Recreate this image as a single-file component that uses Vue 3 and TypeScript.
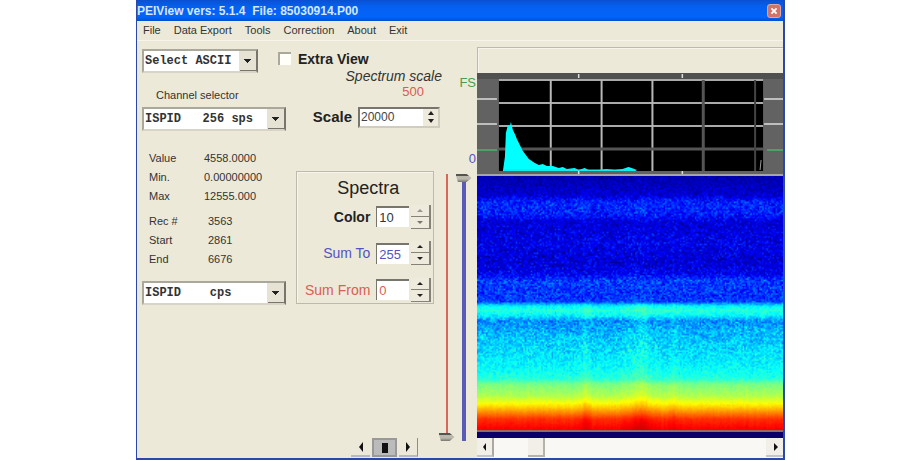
<script setup lang="ts">
import { onMounted, ref } from 'vue'

const menu: string[] = ['File', 'Data Export', 'Tools', 'Correction', 'About', 'Exit']

const readings = [
  { label: 'Value', value: '4558.0000' },
  { label: 'Min.', value: '0.00000000' },
  { label: 'Max', value: '12555.000' },
]
const records = [
  { label: 'Rec #', value: '3563' },
  { label: 'Start', value: '2861' },
  { label: 'End', value: '6676' },
]
const spectra = ref([
  { id: 'color', label: 'Color', value: '10', tone: 'strong' },
  { id: 'sum-to', label: 'Sum To', value: '255', tone: 'blue' },
  { id: 'sum-from', label: 'Sum From', value: '0', tone: 'red' },
])
const scale = ref('20000')
const extraView = ref(false)
const sumFrom = ref(0)
const sumTo = ref(255)
const position = ref(20)

const nb = '\u00a0'
const channelLabel = `ISPID${nb.repeat(3)}256 sps`
const unitLabel = `ISPID${nb.repeat(4)}cps`

function step(item: { value: string }, by: number): void {
  item.value = String(Math.max(0, Number(item.value) + by))
}

function stepScale(by: number): void {
  scale.value = String(Math.max(0, Number(scale.value) + by))
}

// Mean intensity by depth: [relative height, intensity 0..1, noise]
const profile: [number, number, number][] = [
  [0, 0.045, 0.04], [0.07, 0.075, 0.06], [0.1, 0.155, 0.09], [0.145, 0.155, 0.09],
  [0.18, 0.085, 0.07], [0.26, 0.105, 0.08], [0.34, 0.085, 0.08], [0.385, 0.11, 0.08],
  [0.41, 0.185, 0.09], [0.47, 0.17, 0.09], [0.495, 0.19, 0.07], [0.51, 0.36, 0.04],
  [0.53, 0.41, 0.04], [0.55, 0.37, 0.05], [0.57, 0.26, 0.09], [0.61, 0.3, 0.09],
  [0.68, 0.34, 0.08], [0.75, 0.37, 0.05], [0.8, 0.41, 0.035], [0.82, 0.49, 0.025],
  [0.87, 0.55, 0.02], [0.9, 0.63, 0.015], [0.93, 0.73, 0.01], [0.96, 0.83, 0.01],
  [1, 0.88, 0.01],
]

function profileAt(t: number): [number, number] {
  let i = 1
  while (i < profile.length - 1 && profile[i][0] < t) i++
  const a = profile[i - 1]
  const b = profile[i]
  const k = (t - a[0]) / (b[0] - a[0])
  return [a[1] + (b[1] - a[1]) * k, a[2] + (b[2] - a[2]) * k]
}

function jet(v: number): [number, number, number] {
  const ramp = (c: number) => 255 * Math.min(1, Math.max(0, 1.5 - Math.abs(4 * v - c)))
  return [ramp(3), ramp(2), ramp(1)]
}

const spectrogram = ref<HTMLCanvasElement | null>(null)

onMounted(() => {
  const canvas = spectrogram.value
  const ctx = canvas?.getContext('2d')
  if (!canvas || !ctx) return
  let seed = 20507
  const random = () => {
    seed = (seed * 1664525 + 1013904223) >>> 0
    return seed / 4294967296
  }
  const { width: w, height: h } = canvas
  const image = ctx.createImageData(w, h)
  const columns = Array.from({ length: w }, (_, x) => {
    const p = x / w
    const bump = (c: number, s: number) => Math.exp(-(((p - c) / s) ** 2))
    return (random() - 0.5) * 0.014 + 0.04 * bump(0.53, 0.045) + 0.035 * bump(0.353, 0.015) + 0.02 * bump(0.635, 0.015)
  })
  for (let y = 0; y < h; y++) {
    const t = y / (h - 1)
    const [mean, noise] = profileAt(t)
    const columnWeight = t > 0.5 ? 1 : 0.25
    for (let x = 0; x < w; x++) {
      const n = random() + random() - 1
      const [r, g, b] = jet(mean + n * noise * 1.2 + columns[x] * columnWeight)
      const o = (y * w + x) * 4
      image.data[o] = r
      image.data[o + 1] = g
      image.data[o + 2] = b
      image.data[o + 3] = 255
    }
  }
  ctx.putImageData(image, 0, 0)
})
</script>

<template>
  <main class="window">
    <header class="titlebar">
      <h1>PEIView vers: 5.1.4&nbsp; File: 85030914.P00</h1>
      <button class="close" type="button" aria-label="Close">
        <svg viewBox="0 0 14 14"><path d="M4 4l6 6M10 4l-6 6" /></svg>
      </button>
    </header>
    <nav class="menu">
      <a v-for="item in menu" :key="item" href="#">{{ item }}</a>
    </nav>

    <div class="body">
      <section class="controls">
        <div class="main">
          <div class="top">
            <select class="combo short" aria-label="ASCII selection"><option>Select ASCII</option></select>
            <label class="extra"><input v-model="extraView" type="checkbox" />Extra View</label>
          </div>
          <div class="columns">
            <div class="channel">
              <label class="caption" for="channel">Channel selector</label>
              <select id="channel" class="combo"><option>{{ channelLabel }}</option></select>
              <dl class="stats">
                <div v-for="r in readings" :key="r.label"><dt>{{ r.label }}</dt><dd>{{ r.value }}</dd></div>
              </dl>
              <dl class="stats records">
                <div v-for="r in records" :key="r.label"><dt>{{ r.label }}</dt><dd>{{ r.value }}</dd></div>
              </dl>
              <select class="combo" aria-label="Unit"><option>{{ unitLabel }}</option></select>
            </div>

            <div class="settings">
              <p class="scale-title">Spectrum scale</p>
              <p class="scale-value">500</p>
              <div class="scale">
                <label for="scale">Scale</label>
                <span class="scale-box">
                  <input id="scale" v-model="scale" type="text" />
                  <span class="spin">
                    <button type="button" aria-label="Increase scale" @click="stepScale(100)"><i class="up"></i></button>
                    <button type="button" aria-label="Decrease scale" @click="stepScale(-100)"><i class="down"></i></button>
                  </span>
                </span>
              </div>
              <section class="group">
                <h2>Spectra</h2>
                <div v-for="s in spectra" :key="s.id" class="field" :class="s.tone">
                  <label :for="s.id">{{ s.label }}</label>
                  <input :id="s.id" v-model="s.value" type="text" />
                  <span class="spin raised">
                    <button type="button" :aria-label="`Increase ${s.label}`" @click="step(s, 1)"><i class="up"></i></button>
                    <button type="button" :aria-label="`Decrease ${s.label}`" @click="step(s, -1)"><i class="down"></i></button>
                  </span>
                </div>
              </section>
            </div>
          </div>
          <div class="player">
            <button type="button" aria-label="Back"><svg viewBox="0 0 8 10"><path d="M6 0v10L2 5z" /></svg></button>
            <button class="stop" type="button" aria-label="Stop"><svg viewBox="0 0 8 10"><path d="M1 0h6v10H1z" /></svg></button>
            <button type="button" aria-label="Forward"><svg viewBox="0 0 8 10"><path d="M2 0v10l4-5z" /></svg></button>
          </div>
        </div>

        <div class="gauge">
          <span class="full">FS</span>
          <span class="zero">0</span>
          <div class="sliders">
            <input v-model.number="sumFrom" class="slider from" type="range" min="0" max="255" aria-label="Sum from" />
            <input v-model.number="sumTo" class="slider to" type="range" min="0" max="255" aria-label="Sum to" />
          </div>
        </div>
      </section>

      <section class="view">
        <div class="strip"></div>
        <svg class="plot" viewBox="0 0 307 103" preserveAspectRatio="none" role="img" aria-label="Spectrum">
          <rect width="307" height="103" fill="#626262" />
          <rect width="307" height="6" fill="#505050" />
          <rect x="22" y="7" width="265" height="91" fill="#000" />
          <g stroke="#aaa" stroke-width="2">
            <path d="M22 7h265M22 30h265M22 53h265" />
            <path d="M74 7v91M125 7v91M176 7v91" stroke="#b8b8b8" />
            <path d="M22 76h265M227 7v91" stroke="#555" stroke-width="3" />
            <path d="M279 7v91" stroke="#444" />
          </g>
          <path d="M102 1v4M206 1v4M102 98v4M206 98v4M0 26h20M288 26h19M0 51h20M288 51h19" stroke="#ddd" stroke-width="1.5" />
          <path d="M0 77h20M291 77h16" stroke="#4fa068" stroke-width="2" />
          <path d="M0 102h307" stroke="#a5a5a5" stroke-width="2" />
          <path
            d="M26 98L28 84L29 60L31 52L33 53L34 49L36 57L38 61L40 66L42 70L44 74L46 78L49 82L52 86L55 88L58 90L62 92L66 91L70 93L76 93L82 95L86 94L90 96L98 95L102 97L108 95L112 97L122 97L130 96L138 97L146 96L152 94L158 96L160 98Z"
            fill="#0ff"
          />
          <path d="M27 97h133" stroke="#2fd5d5" stroke-width="1" />
          <path d="M284 97l1-10" stroke="#999" />
        </svg>
        <div class="spectrogram">
          <canvas ref="spectrogram" width="205" height="169"></canvas>
        </div>
        <div class="scroll">
          <button type="button" aria-label="Scroll left"><svg viewBox="0 0 8 10"><path d="M5 1v8L2 5z" /></svg></button>
          <input v-model.number="position" type="range" min="0" max="150" aria-label="Position" />
          <button type="button" aria-label="Scroll right"><svg viewBox="0 0 8 10"><path d="M3 1v8l4-4z" /></svg></button>
        </div>
      </section>
    </div>
  </main>
</template>

<style>
body {
  margin: 0;
  background: #fff;
}
</style>

<style scoped>
* {
  box-sizing: border-box;
}

.window {
  display: flex;
  flex-direction: column;
  min-height: 100vh;
  margin: 0 135px 0 136px;
  border: solid #2a48ac;
  border-width: 0 2px 2px 1px;
  background: #ece9d8;
  color: #333;
  font: 11px/14px "Liberation Sans", Arial, sans-serif;
}

h1,
h2,
p,
dl,
dd {
  margin: 0;
}

button {
  padding: 0;
  border: 0;
  background: none;
}

.titlebar {
  display: flex;
  align-items: center;
  justify-content: space-between;
  height: 21px;
  background: linear-gradient(#0a50d0, #0560f0 30%, #0364fa 80%, #0450cc);
}

.titlebar h1 {
  color: #d6e6ff;
  font: bold 12px/20px "Liberation Sans", Arial, sans-serif;
}

.close {
  display: flex;
  width: 14px;
  height: 14px;
  margin-right: 2px;
  border: 1px solid #dfa6a8;
  border-radius: 3px;
  background: #cf7468;
}

.close svg {
  width: 12px;
  height: 12px;
  fill: none;
  stroke: #fff;
  stroke-width: 2;
}

.menu {
  display: flex;
  gap: 13px;
  height: 20px;
  padding-left: 6px;
  border-bottom: 1px solid #f7f5ea;
}

.menu a {
  color: #333;
  line-height: 19px;
  text-decoration: none;
}

.body {
  display: flex;
  flex: 1;
}

.controls {
  display: flex;
  flex: 0 0 340px;
}

.main {
  display: flex;
  flex: 1;
  flex-direction: column;
  padding-left: 5px;
}

.top {
  display: flex;
  gap: 20px;
  height: 28px;
  padding-top: 8px;
}

.combo {
  width: 144px;
  height: 24px;
  padding: 0 1px;
  border: 2px solid #aaa79b;
  border-right-color: #77756c;
  border-bottom-color: #d8d5c8;
  border-radius: 0;
  appearance: none;
  background:
    linear-gradient(#222, #222) right 5px top 8px / 7px 1px no-repeat,
    linear-gradient(#222, #222) right 6px top 9px / 5px 1px no-repeat,
    linear-gradient(#222, #222) right 7px top 10px / 3px 1px no-repeat,
    linear-gradient(#222, #222) right 8px top 11px / 1px 1px no-repeat,
    linear-gradient(#77756c, #77756c) right bottom / 16px 1px no-repeat,
    linear-gradient(#e6e3d4, #e6e3d4) right top / 17px 100% no-repeat,
    #fff;
  color: #333;
  font: bold 12px/18px "Liberation Mono", monospace;
}

.combo.short {
  flex: 0 0 116px;
}

.extra {
  display: flex;
  gap: 7px;
  height: 20px;
  color: #222;
  font-size: 14px;
  font-weight: bold;
  line-height: 20px;
}

.extra input {
  width: 13px;
  height: 13px;
  margin: 3px 0 0;
  border: solid #aaa79b;
  border-width: 2px 0 0 2px;
  appearance: none;
  background: #fffef8;
}

.columns {
  display: flex;
  gap: 10px;
}

.channel {
  display: flex;
  flex-direction: column;
  flex: 0 0 144px;
  padding-top: 19px;
}

.caption {
  padding-left: 14px;
  margin-bottom: 5px;
}

.stats {
  display: grid;
  gap: 5px;
  margin: 20px 0 0 7px;
}

.stats.records {
  margin: 11px 0 15px 7px;
}

.stats div {
  display: grid;
  grid-template-columns: 55px 1fr;
}

.records div {
  grid-template-columns: 59px 1fr;
}

.settings {
  flex: 0 0 146px;
}

.scale-title {
  font-size: 14px;
  font-style: italic;
  line-height: 14px;
  text-align: right;
}

.scale-value {
  padding-right: 18px;
  color: #dc5a50;
  font-size: 13px;
  line-height: 18px;
  text-align: right;
}

.scale {
  display: flex;
  align-items: center;
  justify-content: flex-end;
  gap: 6px;
  height: 20px;
  margin: 6px 0 44px;
  padding-right: 2px;
}

.scale label {
  color: #222;
  font-size: 15px;
  font-weight: bold;
}

.scale-box {
  display: flex;
  width: 82px;
  height: 21px;
  border: 2px solid #99978c;
  border-color: #77756c #d0cdbf #d0cdbf #77756c;
  background: #fff;
}

.scale-box input {
  flex: 1;
  min-width: 0;
  padding: 0 1px;
  border: 0;
  background: none;
  color: #444;
  font: 12px/16px "Liberation Sans", Arial, sans-serif;
}

.spin {
  display: grid;
  width: 15px;
}

.spin button {
  display: flex;
  align-items: center;
  justify-content: center;
  background: #eeebdd;
}

.up,
.down {
  border: 3px solid transparent;
}

.up {
  border-top: 0;
  border-bottom: 4px solid #222;
}

.down {
  border-top: 4px solid #222;
  border-bottom: 0;
}

.group {
  display: grid;
  gap: 11px;
  width: 138px;
  height: 133px;
  padding: 6px 2px 0 8px;
  border: 1px solid #bdbaad;
  box-shadow: inset 1px 1px #f8f6ec;
}

.group h2 {
  margin-bottom: -6px;
  color: #222;
  font-size: 18px;
  font-weight: normal;
  line-height: 20px;
  text-align: center;
}

.field {
  display: grid;
  grid-template-columns: 1fr 33px 20px;
  gap: 2px;
  align-items: center;
  height: 24px;
}

.field label {
  padding-right: 4px;
  font-size: 14px;
  text-align: right;
  white-space: nowrap;
}

.field input {
  width: 33px;
  height: 21px;
  padding: 0 2px;
  border: solid #77756c;
  border-width: 2px 0 0 1px;
  border-radius: 0;
  background: #fff;
  color: inherit;
  font: 13px/18px "Liberation Sans", Arial, sans-serif;
}

.strong label {
  color: #222;
  font-weight: bold;
}

.blue {
  color: #5453c4;
}

.red {
  color: #d85f55;
}

.raised {
  width: 20px;
  height: 24px;
}

.raised button {
  border: solid #858378;
  border-width: 0 2px 1px 0;
}

.raised .up {
  border-width: 0 3px 3px;
}

.raised .down {
  border-width: 3px 3px 0;
}

.strong .raised .up {
  border-bottom-color: #99978c;
}

.strong .raised .down {
  border-top-color: #77756c;
}

.player {
  display: flex;
  gap: 2px;
  justify-content: flex-end;
  margin-top: auto;
  padding: 0 24px 1px 0;
}

.player button {
  display: flex;
  align-items: center;
  justify-content: center;
  width: 19px;
  height: 19px;
  border-right: 1px solid #8f8d84;
  border-bottom: 2px solid #b6b9cc;
}

.player button:first-child {
  border-right: 0;
}

.player .stop {
  width: 25px;
  border: 2px solid #999;
  background: #bbb;
}

.player svg,
.scroll svg {
  width: 8px;
  height: 10px;
  fill: #111;
}

.gauge {
  display: flex;
  flex-direction: column;
  flex: 0 0 35px;
  padding: 35px 1px 17px 0;
  font-size: 13px;
  text-align: right;
}

.full {
  margin-bottom: 62px;
  color: #43a048;
}

.zero {
  margin-bottom: 8px;
  color: #5452c4;
}

.sliders {
  display: flex;
  flex: 1;
  margin-left: -4px;
}

.slider {
  width: 17px;
  height: auto;
  margin: 0;
  appearance: none;
  writing-mode: vertical-lr;
  direction: rtl;
}

.slider.from {
  background: linear-gradient(#d8675a, #d8675a) center / 2px 100% no-repeat;
}

.slider.to {
  background: linear-gradient(#5a5ab8, #5a5ab8) center / 4px 100% no-repeat;
}

.slider::-webkit-slider-thumb {
  width: 16px;
  height: 8px;
  appearance: none;
  background: linear-gradient(#55544e 2px, #bbb9ae 2px, #bbb9ae 5px, #77756c);
  clip-path: polygon(0 0, 70% 0, 100% 50%, 70% 100%, 15% 100%);
}

.view {
  display: flex;
  flex: 1;
  flex-direction: column;
  min-width: 0;
}

.strip {
  height: 26px;
  margin-top: 6px;
  border: solid #bdbaad;
  border-width: 1px 0 0 1px;
  box-shadow: inset 1px 1px #f6f4ea;
}

.plot {
  display: block;
  width: 100%;
  height: 103px;
}

.spectrogram {
  position: relative;
  flex: 1;
  min-height: 200px;
  border-bottom: 6px solid #0a0068;
  background: #0a0068;
}

.spectrogram canvas {
  position: absolute;
  inset: 0;
  width: 100%;
  height: 100%;
  border-bottom: 2px solid #98695a;
}

.scroll {
  display: flex;
  height: 20px;
  background: #f9f8f4;
}

.scroll button {
  display: flex;
  align-items: center;
  justify-content: center;
  width: 17px;
  height: 19px;
  border-right: 2px solid #aaa89f;
  border-bottom: 2px solid #c4c4cc;
  background: #f1efe7;
}

.scroll button:last-child {
  border-right: 0;
}

.scroll input {
  flex: 1;
  min-width: 0;
  height: 19px;
  margin: 0;
  appearance: none;
  background: none;
}

.scroll input::-webkit-slider-thumb {
  width: 17px;
  height: 19px;
  appearance: none;
  border: solid #b4b2a9;
  border-width: 0 2px 2px 0;
  background: #f1efe7;
}
</style>
